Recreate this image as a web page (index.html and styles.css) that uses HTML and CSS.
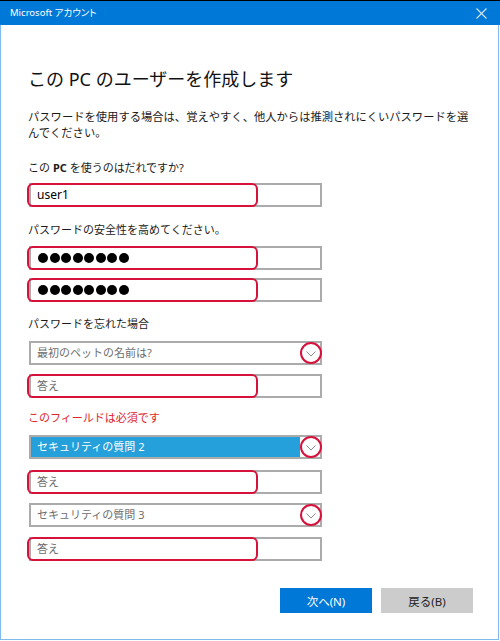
FILE: index.html
```html
<!DOCTYPE html>
<html lang="ja">
<head>
<meta charset="utf-8">
<title>Microsoft アカウント</title>
<link rel="stylesheet" href="styles.css">
</head>
<body>
<div class="window">
  <div class="titlebar">
    <span class="title">Microsoft アカウント</span>
    <svg class="close" width="11" height="11" viewBox="0 0 11 11"><path d="M0.5 0.5 L10.5 10.5 M10.5 0.5 L0.5 10.5" stroke="#d6e8f8" stroke-width="1.1" fill="none"/></svg>
  </div>
  <div class="content">
    <h1 class="heading">この PC のユーザーを作成します</h1>
    <p class="intro">パスワードを使用する場合は、覚えやすく、他人からは推測されにくいパスワードを選んでください。</p>

    <div class="label l-who">この <b>PC</b> を使うのはだれですか?</div>
    <div class="field f-user"><span class="val">user1</span><span class="mark"></span></div>

    <div class="label l-pw">パスワードの安全性を高めてください。</div>
    <div class="field f-pw1"><span class="val dots"><i></i><i></i><i></i><i></i><i></i><i></i><i></i><i></i></span><span class="mark"></span></div>
    <div class="field f-pw2"><span class="val dots"><i></i><i></i><i></i><i></i><i></i><i></i><i></i><i></i></span><span class="mark"></span></div>

    <div class="label l-forgot">パスワードを忘れた場合</div>
    <div class="field dd f-dd1"><span class="val ph">最初のペットの名前は?</span><span class="circle"><svg width="10" height="6" viewBox="0 0 10 6"><path d="M0.5 0.5 L5 5 L9.5 0.5" stroke="#8a8a8a" stroke-width="1" fill="none"/></svg></span></div>
    <div class="field f-a1"><span class="val ph">答え</span><span class="mark"></span></div>

    <div class="error">このフィールドは必須です</div>
    <div class="field dd sel f-dd2"><span class="val">セキュリティの質問 2</span><span class="circle"><svg width="10" height="6" viewBox="0 0 10 6"><path d="M0.5 0.5 L5 5 L9.5 0.5" stroke="#8a8a8a" stroke-width="1" fill="none"/></svg></span></div>
    <div class="field f-a2"><span class="val ph">答え</span><span class="mark"></span></div>

    <div class="field dd f-dd3"><span class="val ph">セキュリティの質問 3</span><span class="circle"><svg width="10" height="6" viewBox="0 0 10 6"><path d="M0.5 0.5 L5 5 L9.5 0.5" stroke="#8a8a8a" stroke-width="1" fill="none"/></svg></span></div>
    <div class="field f-a3"><span class="val ph">答え</span><span class="mark"></span></div>

    <div class="buttons">
      <div class="btn primary">次へ(N)</div>
      <div class="btn secondary">戻る(B)</div>
    </div>
  </div>
</div>
</body>
</html>
```

FILE: styles.css
```css
html, body {
  margin: 0;
  padding: 0;
  background: #ffffff;
}
body {
  font-family: "Noto Sans", "Noto Sans CJK JP", sans-serif;
  color: #000;
}
.window {
  width: 500px;
  height: 641px;
  box-sizing: border-box;
  border-top: 1px solid #000;
  display: flex;
  flex-direction: column;
}
.titlebar {
  height: 24px;
  flex: 0 0 24px;
  background: #0078d7;
  display: flex;
  align-items: center;
  justify-content: space-between;
  padding: 0 13px 0 10px;
}
.title {
  color: #ffffff;
  font-size: 9.5px;
  font-feature-settings: "palt";
  line-height: 12px;
}
.close {
  display: block;
  margin-top: 1px;
}
.content {
  flex: 1;
  border-left: 1px solid #7fbbec;
  border-right: 1px solid #7fbbec;
  border-bottom: 1px solid #7fbbec;
  margin-right: 1px;
  margin-bottom: 1px;
  padding-left: 27px;
  display: flex;
  flex-direction: column;
  align-items: flex-start;
}
.heading {
  margin: 42px 0 0 0;
  font-size: 18px;
  font-weight: normal;
  line-height: 24px;
  color: #111;
}
.intro {
  margin: 18px 0 0 0;
  width: 446px;
  font-size: 11.3px;
  line-height: 16px;
  color: #1a1a1a;
}
.label, .error {
  font-size: 11px;
  line-height: 16px;
  color: #1a1a1a;
}
.label b { font-weight: bold; }
.error { color: #e0242b; }
.l-who { margin-top: 19px; }
.l-pw { margin-top: 15px; }
.l-forgot { margin-top: 14px; }
.error { margin-top: 12px; }

.field {
  position: relative;
  width: 293px;
  height: 24px;
  margin-left: 1px;
  box-sizing: border-box;
  border: 2px solid #ababab;
  display: flex;
  align-items: stretch;
  font-size: 11px;
}
.val {
  display: flex;
  align-items: center;
  padding-left: 6px;
  line-height: 16px;
  color: #000;
}
.val.ph { color: #6e6e6e; }
.f-user .val { font-size: 12px; }
.dots { gap: 1.5px; padding-left: 7px; }
.dots i {
  display: block;
  width: 10px;
  height: 10px;
  border-radius: 50%;
  background: #000;
}
.mark {
  position: absolute;
  left: -4px;
  top: -2px;
  width: 231px;
  height: 24px;
  box-sizing: border-box;
  border: 2px solid #d6123c;
  border-radius: 6px;
}
.circle {
  position: absolute;
  right: -2px;
  top: -1px;
  width: 22px;
  height: 22px;
  box-sizing: border-box;
  border: 2px solid #d6123c;
  border-radius: 50%;
  display: flex;
  align-items: center;
  justify-content: center;
}
.circle svg { display: block; margin-top: 1px; }
.sel .val {
  background: #26a0da;
  color: #ffffff;
  width: 263px;
}

.f-user { margin-top: 7px; }
.f-pw1 { margin-top: 8px; }
.f-pw2 { margin-top: 8px; }
.f-dd1 { margin-top: 9px; }
.f-a1 { margin-top: 9px; }
.f-dd2 { margin-top: 9px; }
.f-a2 { margin-top: 11px; }
.f-dd3 { margin-top: 9px; }
.f-a3 { margin-top: 10px; }

.buttons {
  align-self: stretch;
  margin-top: 27px;
  padding-right: 25px;
  display: flex;
  justify-content: flex-end;
  gap: 9px;
}
.btn {
  width: 92px;
  height: 25px;
  display: flex;
  align-items: center;
  justify-content: center;
  font-size: 11.5px;
}
.primary { background: #0078d7; color: #ffffff; }
.secondary { background: #cccccc; color: #222; }
```
